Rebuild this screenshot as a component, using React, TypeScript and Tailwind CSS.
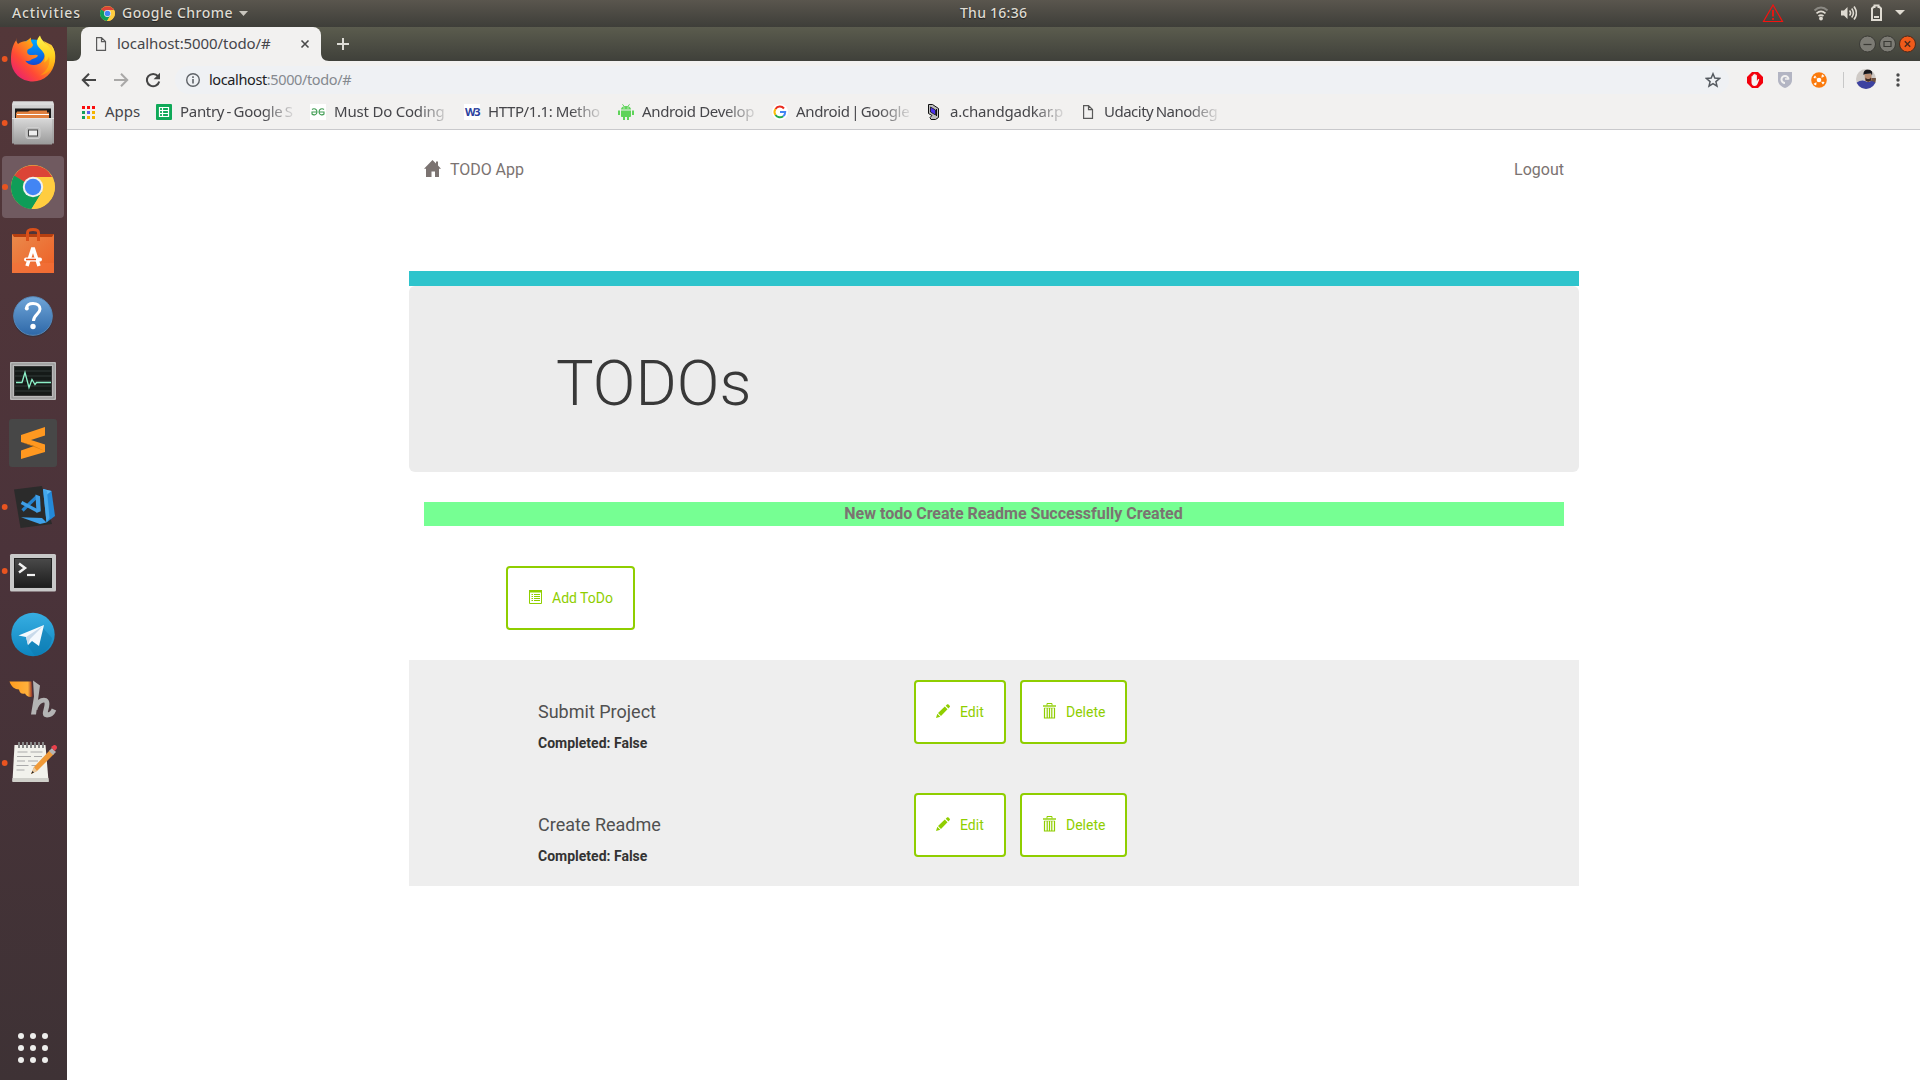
import React from "react";

type IconProps = { children: React.ReactNode; w?: number; h?: number; className?: string };

const Svg = ({ children, w = 16, h = 16, className = "" }: IconProps) => (
  <svg width={w} height={h} viewBox={`0 0 ${w} ${h}`} className={`block shrink-0 ${className}`} fill="none">
    {children}
  </svg>
);

const PageIcon = () => (
  <Svg w={12} h={16}>
    <path d="M1.600 1.600h4.900l4 4v8.800H1.600z M6.500 1.800v3.800h4" stroke="#5a5a5a" strokeWidth="1.200" />
  </Svg>
);

const ChromeLogo = ({ size }: { size: number }) => (
  <svg width={size} height={size} viewBox="0 0 44 44" className="block shrink-0">
    <circle cx="22" cy="22" r="22" fill="#ffcd40" />
    <path d="M22 22 3 11A22 22 0 0 1 41.2 12H22z" fill="#db4437" />
    <path d="M22 22 3.2 10.6A22 22 0 0 0 20.500 44L31 27z" fill="#0f9d58" />
    <path d="M22 12h19.200A22 22 0 0 1 20.500 44L31 27z" fill="#ffcd40" />
    <circle cx="22" cy="22" r="10.200" fill="#f1f1f1" />
    <circle cx="22" cy="22" r="8.200" fill="#4285f4" />
  </svg>
);

const Slot = ({ children, running = false, dy = 0 }: { children: React.ReactNode; running?: boolean; dy?: number }) => (
  <svg width="67" height="64" viewBox="0 0 67 64" className="block shrink-0">
    <g transform={`translate(0 ${dy})`}>{children}</g>
    {running && <circle cx="4.700" cy="32" r="2.900" fill="#e95420" />}
  </svg>
);

const Dock = () => (
  <aside className="flex w-[67px] shrink-0 flex-col justify-between bg-linear-to-b from-[#533739] via-[#4b333a] to-[#3e3235]">
    <svg width="0" height="0" className="absolute">
      <defs>
        <linearGradient id="fox" x1="1" y1="0" x2="0" y2="1">
          <stop offset="0" stopColor="#fff44f" />
          <stop offset=".35" stopColor="#ffa016" />
          <stop offset=".65" stopColor="#ff4a35" />
          <stop offset="1" stopColor="#e0108a" />
        </linearGradient>
        <linearGradient id="globe" x1="0" y1="0" x2="0" y2="1">
          <stop offset="0" stopColor="#00aaff" />
          <stop offset=".6" stopColor="#0a5be0" />
          <stop offset="1" stopColor="#40108a" />
        </linearGradient>
        <linearGradient id="flame" x1="0" y1="0" x2="0" y2="1">
          <stop offset="0" stopColor="#fff44f" />
          <stop offset=".5" stopColor="#ffd21f" />
          <stop offset="1" stopColor="#ff8a10" />
        </linearGradient>
        <linearGradient id="steel" x1="0" y1="0" x2="0" y2="1">
          <stop offset="0" stopColor="#d8d8d8" />
          <stop offset="1" stopColor="#9a9a9a" />
        </linearGradient>
        <linearGradient id="bag" x1="0" y1="0" x2="1" y2="1">
          <stop offset="0" stopColor="#ea8a4c" />
          <stop offset="1" stopColor="#ee5f25" />
        </linearGradient>
        <linearGradient id="help" x1="0" y1="0" x2="0" y2="1">
          <stop offset="0" stopColor="#6fa5d8" />
          <stop offset="1" stopColor="#2e68a8" />
        </linearGradient>
        <linearGradient id="screen" x1="0" y1="0" x2="0" y2="1">
          <stop offset="0" stopColor="#4a4a4a" />
          <stop offset="1" stopColor="#1c1c1c" />
        </linearGradient>
        <linearGradient id="tg" x1="0" y1="0" x2="0" y2="1">
          <stop offset="0" stopColor="#37aee2" />
          <stop offset="1" stopColor="#0d85bf" />
        </linearGradient>
        <linearGradient id="wing" x1="0" y1="0" x2="1" y2="0">
          <stop offset="0" stopColor="#ff9c1e" />
          <stop offset=".8" stopColor="#ffb13c" />
          <stop offset="1" stopColor="#8a2a2a" />
        </linearGradient>
      </defs>
    </svg>
    <div className="flex flex-col">
      <Slot running dy={0.5}>
        <circle cx="33" cy="30" r="18" fill="url(#globe)" />
        <path
          d="M16 9.500c0 3 .5 5 2 7 3-2 6-3 8-2.500l5-4c-.5 3 .5 5 2 7 0 3-3 3.500-5.500 5.500-1 3 .5 5 4 5 3 0 5-1 6.500.5-1.500 3-5 2.500-7 4.500-2 1.500-5 1-6 .5 3 4.500 9 5.500 13.500 3.500 5.500-2.500 7-8 5.500-13 3 1 4 3 4.500 5 .5-6-2-11-5-15l8 4c3 4.500 4.500 9 3.500 16-1.500 12-11 20.500-22 20.500-12 0-22-9-22-22 0-9 2-15 5-19z"
          fill="url(#fox)"
        />
        <path
          d="M40 8c-3.500 4-4.500 8-1 12 4.500 4.500 8 8 5 15 3-1.500 4.500-4 5-6 2 7-2 15-9 19 9-2 15-8 15-18 0-5-1-9-3-11 0 2 0 3-.5 4-2.500-6-9.500-8-11.500-15z"
          fill="url(#flame)"
        />
      </Slot>
      <Slot running dy={0.5}>
        <path d="M13 10h40l1 4v38H12V14z" fill="url(#steel)" />
        <path d="M13 10h40l1 3.500H12z" fill="#dcdcdc" />
        <path d="M15 17h36v10H15z" fill="#1b1b1b" />
        <path d="M17 21v-1h11l2-1h17v2h2v7H16v-7z" fill="#e0803f" />
        <path d="M17 23h32" stroke="#fff" />
        <path d="M14 27h38v26H14z" fill="url(#steel)" />
        <path d="M12 27h42" stroke="#e4e4e4" />
        <rect x="26" y="36" width="14" height="11" rx="2" fill="#bdbdbd" stroke="#cfcfcf" />
        <rect x="28.500" y="38.500" width="9" height="6" fill="#eee" stroke="#444" />
      </Slot>
      <div className="flex h-16 w-[67px] items-center pl-0.5">
        <div className="flex h-[62px] w-[62px] items-center rounded bg-[#705a60]">
          <span className="size-1.5 shrink-0 rounded-full bg-[#e95420]" />
          <div className="ml-[3px]">
            <ChromeLogo size={44} />
          </div>
        </div>
      </div>
      <Slot dy={1}>
        <path d="M12 14h42v4H12z" fill="#b53f10" />
        <path d="M12 14l2 3h38l2-3v39H12z" fill="url(#bag)" />
        <path d="M12 43h42v10H12z" fill="#f4713a" opacity=".6" />
        <path d="M27.500 21v-8c0-3 2-3.500 5.500-3.500s5.500.5 5.500 3.500v8" stroke="#d9501a" strokeWidth="3" fill="none" />
        <path d="M27 46l5.500-17h1L39 46" stroke="#fff" strokeWidth="3.500" fill="none" />
        <rect x="24" y="37.500" width="18" height="4" rx="2" fill="#fff" />
        <path d="M26 39.500h10" stroke="#e95420" strokeWidth="1.500" />
      </Slot>
      <Slot dy={1}>
        <circle cx="33" cy="33" r="20" fill="#1d2d40" opacity=".35" />
        <circle cx="33" cy="32" r="19.300" fill="url(#help)" stroke="#5788b8" />
        <path d="M26.500 24c.5-3 3-4.500 6.500-4.500 4 0 7 2 7 5.500 0 5-6.500 5.500-6.500 12" stroke="#fff" strokeWidth="3" fill="none" />
        <circle cx="26.800" cy="24.500" r="2" fill="#fff" />
        <circle cx="33" cy="42.500" r="2.700" fill="#fff" />
      </Slot>
      <Slot dy={1}>
        <rect x="10" y="14" width="46" height="38" rx="1" fill="#b9b9b9" />
        <rect x="12" y="16" width="42" height="34" fill="none" stroke="#8e8e8e" />
        <rect x="14.500" y="18.500" width="37" height="29" fill="#151a18" stroke="#333" />
        <path d="M15 23h36M15 28h36M15 33h36M15 38h36M15 43h36" stroke="#333b38" />
        <path d="M16 34.500h6l3-10 4 15 3-8 3 5 1.500-2H51" stroke="#8cf0c8" strokeWidth="1.300" fill="none" />
      </Slot>
      <Slot>
        <rect x="9" y="8" width="48" height="48" rx="3" fill="#474747" />
        <path d="M45 16v8.500l-14 4.500 14 4.500V41L21 48v-8.500l13-4.500-13-4V24z" fill="#ff9820" />
        <path d="M21 31l24 9-11-5z" fill="#d87b0c" />
      </Slot>
      <Slot running>
        <path d="M14 14.500 42 11l10 38-31.500 4z" fill="#2b2b2b" />
        <path d="M43 14l8.500 2L55 41l-8.500 6.500z" fill="#2489d8" />
        <path d="M43 14l8.500 2-5 4z" fill="#5bb8f4" />
        <path d="M43 14l4 2 2.500 27-3 4.500z" fill="#45a8ec" />
        <path d="M21 42.200l21 .8 4.500 4.500L40 49z" fill="#3ea1ea" />
        <path d="M22.500 35.500 37 21.500" stroke="#2483cf" strokeWidth="3.200" fill="none" />
        <path d="M21.500 27.500 37.500 36" stroke="#3f9ee6" strokeWidth="3.200" fill="none" />
        <path d="M35.500 19.500l4.500 1.800.8 15-4.300 1.700z" fill="#3f9ee6" />
      </Slot>
      <Slot running dy={0.5}>
        <rect x="10" y="14.500" width="46" height="37.500" rx="1.500" fill="#c8c8c8" />
        <rect x="14.500" y="19" width="37" height="29" fill="url(#screen)" stroke="#222" />
        <path d="M19 24l6 4.500-6 4.500" stroke="#f2f2f2" strokeWidth="2.500" fill="none" />
        <path d="M27 35.500h8" stroke="#f2f2f2" strokeWidth="2.200" />
      </Slot>
      <Slot>
        <circle cx="33" cy="31.500" r="21.700" fill="url(#tg)" />
        <path d="M42 24l10 11c-1 9-8 17-17 18l-7-10z" fill="#0c75aa" opacity=".4" />
        <path d="M18.500 32.500 44 22 39 43l-7-5-4 4-2-8z" fill="#f4f9fd" />
        <path d="M26 34l17-11-13 13-2 6z" fill="#c8daea" />
      </Slot>
      <Slot dy={0.5}>
        <path d="M9.500 14h22l1 15c-3 1-6 0-7.500-3-3 1-5.500-.5-6-4-4 0-8-3-9.500-8z" fill="url(#wing)" />
        <path d="M33 13l7 5-4 29h-5l3-18z" fill="#b4b4b4" />
        <path d="M35 42c2-9 12-13 12-5.500 0 5-4 11 0 11 4 0 6-3 7-5.500" stroke="#b4b4b4" strokeWidth="4.800" fill="none" />
      </Slot>
      <Slot running dy={-2}>
        <path d="M14.500 16h31l3 36H12.500z" fill="#f2f2ec" />
        <path d="M12.500 49h36l.3 4H12.300z" fill="#d0d0ca" />
        <path d="M17.500 23h10m3 0h12M17 27.500h14m3 0h8M17 32h8m3 0h10M16.500 36.500h12m3 0h5M16.500 41h8" stroke="#aaa" />
        <path d="M19 13v6M23 13v6M27 13v6M31 13v6M35 13v6M39 13v6M43 13v6" stroke="#888" strokeWidth="2" />
        <path d="M31 45l3-7 16-17 4 4-17 17z" fill="#f09a38" />
        <path d="M31 45l3-7 3 4z" fill="#e8c9a0" />
        <path d="M31 45l1.500-3 1.500 1.500z" fill="#222" />
        <path d="M49 22l3-3 4 4-3 3z" fill="#b4b4b4" />
        <path d="M51 18l3-2c2-.5 4 2 2.500 4l-2 2z" fill="#e8414c" />
      </Slot>
    </div>
    <div className="mb-[17px] ml-[18px] grid w-[30px] grid-cols-3 gap-1.5">
      {Array.from({ length: 9 }, (_, i) => (
        <span key={i} className="size-1.5 rounded-full bg-[#eeeeec]" />
      ))}
    </div>
  </aside>
);

const TopBar = () => (
  <header className="flex h-[27px] items-center bg-linear-to-b from-[#5a564e] to-[#3e3e39] text-[14px] font-medium text-[#dfdbd2] [text-shadow:0_1px_1px_#222]">
    <div className="flex w-[960px] items-center pl-3">
      <span className="w-[88px] pb-0.5 tracking-[0.85px]">Activities</span>
      <ChromeLogo size={15} />
      <span className="ml-[7px] w-[117px] pb-0.5 tracking-[0.5px]">Google Chrome</span>
      <Svg w={10} h={6}>
        <path d="M0 0h9L4.500 5z" fill="#c9c6be" />
      </Svg>
    </div>
    <span className="pb-0.5 tracking-[0.25px] whitespace-nowrap">Thu 16:36</span>
    <div className="ml-auto flex items-center pr-[15px] pb-px">
      <Svg w={22} h={20} className="mr-[29px]">
        <path d="M11 2 1.500 18.500h19z" stroke="#f5120f" strokeWidth="1.200" />
        <path d="M11 7v6.500M11 15v2" stroke="#f5120f" strokeWidth="1.800" />
      </Svg>
      <Svg w={16} h={16} className="mr-[12px]">
        <path d="M1.500 5.500c4-4 9-4 13 0" stroke="#8b8983" strokeWidth="2" />
        <path d="M3.500 8.300c3-2.600 6-2.600 9 0M5.500 11c1.800-1.400 3.200-1.400 5 0" stroke="#dfdbd2" strokeWidth="1.700" />
        <circle cx="8" cy="13.500" r="1.900" fill="#dfdbd2" />
      </Svg>
      <Svg w={16} h={16} className="mr-[13px]">
        <path d="M0 5.500h3L6.500 2v12L3 10.500H0z" fill="#dfdbd2" />
        <path d="M8.500 5.500c1.300 1.500 1.300 3.500 0 5M10.700 3.500c2.300 3 2.300 6 0 9M13 1.500c3 4 3 9 0 13" stroke="#dfdbd2" strokeWidth="1.600" />
      </Svg>
      <Svg w={14} h={18} className="mr-[11px]">
        <path d="M2 16V4.500L3.500 3h1V1.500h4V3h1L11 4.500V16z" stroke="#dfdbd2" strokeWidth="2" />
        <path d="M4 13h5" stroke="#dfdbd2" strokeWidth="2" />
      </Svg>
      <Svg w={10} h={6}>
        <path d="M0 0h10L5 5z" fill="#dfdbd2" />
      </Svg>
    </div>
  </header>
);

const TabStrip = () => (
  <div className="flex h-[34px] bg-linear-to-b from-[#5b5c4e] to-[#3f403a]">
    <div className="ml-1.5 flex w-2 items-end">
      <Svg w={8} h={8}>
        <path d="M8 0v8H0c5 0 8-3 8-8z" fill="#f2f1f0" />
      </Svg>
    </div>
    <div className="flex w-[240px] items-center rounded-t-lg bg-[#f2f1f0] pl-[14px]">
      <PageIcon />
      <span className="ml-[10px] w-[183px] pb-0.5 text-[15px] tracking-[-0.08px] whitespace-nowrap text-[#45454a]">
        localhost:5000/todo/#
      </span>
      <Svg w={10} h={10}>
        <path d="M1.500 1.500l7 7M8.500 1.500l-7 7" stroke="#4a4a4a" strokeWidth="1.600" />
      </Svg>
    </div>
    <div className="flex w-2 items-end">
      <Svg w={8} h={8}>
        <path d="M0 0v8h8C3 8 0 5 0 0z" fill="#f2f1f0" />
      </Svg>
    </div>
    <div className="ml-2 flex items-center">
      <Svg w={12} h={12}>
        <path d="M6 0v12M0 6h12" stroke="#dddcd6" strokeWidth="2" />
      </Svg>
    </div>
    <div className="ml-auto flex items-center gap-[3px] pr-1">
      <Svg w={17} h={18}>
        <circle cx="8.500" cy="9" r="8" fill="#7c7b74" stroke="#3a3a35" />
        <path d="M4.500 9.500h8" stroke="#3a3a35" strokeWidth="1.200" />
      </Svg>
      <Svg w={17} h={18}>
        <circle cx="8.500" cy="9" r="8" fill="#7c7b74" stroke="#3a3a35" />
        <path d="M5 6.500h7v5H5z" stroke="#3a3a35" strokeWidth="1.200" />
      </Svg>
      <Svg w={17} h={18}>
        <circle cx="8.500" cy="9" r="8" fill="#f05a1a" stroke="#4a2a1c" />
        <path d="M5.800 6.300l5.400 5.400M11.200 6.300l-5.400 5.400" stroke="#4a2a1c" strokeWidth="1.400" />
      </Svg>
    </div>
  </div>
);

const Toolbar = () => (
  <div className="flex h-[37px] items-center bg-[#f2f1f0] pl-[14px]">
    <Svg w={16} h={16}>
      <path d="M15 8H2M8 1.800 1.800 8 8 14.200" stroke="#454545" strokeWidth="2" />
    </Svg>
    <Svg w={16} h={16} className="ml-4">
      <path d="M1 8h13M8 1.800 14.200 8 8 14.200" stroke="#a9a8a7" strokeWidth="2" />
    </Svg>
    <Svg w={16} h={16} className="ml-4">
      <path d="M13 4.200A6.200 6.200 0 1 0 14.200 9.500" stroke="#454545" strokeWidth="2" />
      <path d="M15 .8v6.400H8.600z" fill="#454545" />
    </Svg>
    <div className="ml-[14px] flex h-7 w-[1554px] items-center rounded-full bg-[#eff1f4] pl-[10px]">
      <Svg w={16} h={16}>
        <circle cx="8" cy="8" r="6.300" stroke="#5f6368" strokeWidth="1.400" />
        <path d="M8 7v4.500M8 4.200v1.700" stroke="#5f6368" strokeWidth="1.600" />
      </Svg>
      <span className="ml-2 text-[14.5px] tracking-[-0.38px] whitespace-nowrap text-[#85898f]">
        <span className="text-[#202124]">localhost</span>:5000/todo/#
      </span>
      <Svg w={16} h={16} className="mr-2 ml-auto">
        <path d="M8 1.800l1.800 4.300 4.700.4-3.600 3.100 1.100 4.600L8 11.700l-4 2.500 1.100-4.600-3.600-3.100 4.700-.4z" stroke="#555a60" strokeWidth="1.500" />
      </Svg>
    </div>
    <div className="flex items-center">
      <Svg w={16} h={16} className="ml-[18px]">
        <path d="M5 0h6l5 5v6l-5 5H5l-5-5V5z" fill="#f3000c" />
        <path d="M4.500 8V4.500c0-.8 1.200-.8 1.200 0V3.200c0-.9 1.400-.9 1.400 0v-.7c0-.9 1.500-.9 1.500 0v1c0-.9 1.300-.9 1.300 0V9l1-1.500c.6-.8 1.600-.2 1.200.6L10.500 12c-.6 1.300-1.500 2-2.700 2-2.300 0-3.300-1.700-3.300-3.500z" fill="#f4f4f4" />
      </Svg>
      <Svg w={14} h={16} className="ml-[15px]">
        <path d="M0 0h14v8c0 4-3 6.500-7 8-4-1.500-7-4-7-8z" fill="#b3b5c3" />
        <path d="M10.500 7.500A3.500 3.500 0 1 0 7 11" stroke="#f2f1f0" strokeWidth="2" />
        <path d="M7 7h3.500" stroke="#f2f1f0" strokeWidth="1.500" />
      </Svg>
      <Svg w={16} h={16} className="ml-[19px]">
        <circle cx="8" cy="8" r="7.800" fill="#fb7a0c" />
        <circle cx="8" cy="8" r="2.300" fill="#fff" />
        <path d="M3 6l1.500-2M3 5l2.500 1M11 3l2 1.500M11.500 2.800 11 5.500M13 10l-1.500 2M13 11l-2.500-1M5 13l-2-1.500M4.500 13.200 5 10.500" stroke="#fff" strokeWidth="1.300" />
      </Svg>
      <span className="ml-4 h-4 w-px bg-[#c8c8c8]" />
      <Svg w={20} h={20} className="-mt-0.5 ml-3">
        <clipPath id="face">
          <circle cx="10" cy="10" r="10" />
        </clipPath>
        <g clipPath="url(#face)">
          <path d="M0 0h20v20H0z" fill="#cfcac6" />
          <path d="M14 9h6v5h-6z" fill="#6d5040" />
          <path d="M0 14c4-3 7-3 9-2l3 1c3-2 5-1 8 1v6H0z" fill="#3d42a0" />
          <path d="M8.500 5h7v6c-1 2.500-5 3-6.500 0z" fill="#b98c70" />
          <path d="M7.500 6C7 1.500 10 .5 12.500.5S17 2 16 6.500L15 4.500 9 5z" fill="#17161a" />
          <path d="M9.500 8.500c1.500 2 4 2 5.500 0v3c-1.500 1.500-4 1.500-5.500 0z" fill="#3b2a26" />
        </g>
      </Svg>
      <Svg w={6} h={16} className="ml-[19px]">
        <circle cx="3" cy="3" r="1.700" fill="#4a4a4a" />
        <circle cx="3" cy="8" r="1.700" fill="#4a4a4a" />
        <circle cx="3" cy="13" r="1.700" fill="#4a4a4a" />
      </Svg>
    </div>
  </div>
);

const appColors = ["#fb0d0d", "#fb0d0d", "#fb0d0d", "#12a05c", "#5a5ff0", "#f4b400", "#12a05c", "#f4b400", "#f4b400"];

const bookmarks: { label: string; icon: React.ReactNode; spacing: string }[] = [
  {
    label: "Pantry - Google S",
    spacing: "tracking-[-0.3px] [word-spacing:-1.2px]",
    icon: (
      <Svg>
        <rect width="16" height="16" rx="1" fill="#0fa958" />
        <path d="M3.500 3.500h9v9h-9zM3.500 6.500h9M3.500 9.500h9M6.500 3.500v9" stroke="#fff" strokeWidth="1.200" />
      </Svg>
    ),
  },
  {
    label: "Must Do Coding",
    spacing: "tracking-[-0.2px]",
    icon: (
      <Svg>
        <path d="M0 0h16v16H0z" fill="#fff" />
        <path d="M2 5.500c2-1.500 5-.5 5 2.500s-3.500 3.500-5 2V8h5M14 5.500c-2-1.500-5-.5-5 2.500s3.500 3.500 5 2V8H9" stroke="#3f9c52" strokeWidth="1.100" />
      </Svg>
    ),
  },
  {
    label: "HTTP/1.1: Metho",
    spacing: "tracking-[-0.4px]",
    icon: (
      <span className="flex size-4 items-center justify-center bg-white font-['Open_Sans',sans-serif] text-[11px] font-bold tracking-[-1.5px] text-[#2b3f9e]">
        W3
      </span>
    ),
  },
  {
    label: "Android Develop",
    spacing: "tracking-[-0.35px]",
    icon: (
      <Svg>
        <path d="M3 5.500C3 3.500 5 2 8 2s5 1.500 5 3.500zM3 6.500h10V12c0 .6-.4 1-1 1H4c-.6 0-1-.4-1-1zM0 6.500h2V11H0zM14 6.500h2V11h-2zM5 12h2v4H5zM9 12h2v4H9z" fill="#5fd35a" />
        <path d="M4.500.3l1.500 2M11.500.3 10 2.300" stroke="#5fd35a" />
        <path d="M5.500 3.500h1v1h-1zM9.500 3.500h1v1h-1z" fill="#fff" />
      </Svg>
    ),
  },
  {
    label: "Android | Google",
    spacing: "tracking-[-0.35px] [word-spacing:-2px]",
    icon: (
      <Svg>
        <circle cx="8" cy="8" r="8" fill="#fff" />
        <path d="M3.500 5A5.300 5.300 0 0 1 12 4.500" stroke="#ea2d20" strokeWidth="2" />
        <path d="M3.500 5a5.300 5.300 0 0 0 0 6" stroke="#fbbc05" strokeWidth="2" />
        <path d="M3.500 11a5.300 5.300 0 0 0 7.700 1.200" stroke="#22a84c" strokeWidth="2" />
        <path d="M8 8h5.200c0 2-.7 3.300-2 4.200" stroke="#4285f4" strokeWidth="2" />
      </Svg>
    ),
  },
  {
    label: "a.chandgadkar.p",
    spacing: "tracking-[-0.2px]",
    icon: (
      <Svg>
        <path d="M2.500.5h4l6 4v9l-3 2H5l-1-2 2-2-3.500-2z" fill="#bcbcbc" stroke="#111" />
        <path d="M4.500 3l5 3v5l-5-3z" fill="#4a2ff0" stroke="#111" strokeWidth=".8" />
        <path d="M10.500 5v7" stroke="#111" />
      </Svg>
    ),
  },
  {
    label: "Udacity Nanodeg",
    spacing: "tracking-[-0.5px] [word-spacing:-1px]",
    icon: (
      <div className="w-4 pl-0.5">
        <PageIcon />
      </div>
    ),
  },
];

const BookmarksBar = () => (
  <div className="flex h-8 items-center border-b border-[#c9c9cc] bg-[#f2f1f0] pb-[3px] pl-[15px] text-[15px] text-[#46464a]">
    <div className="flex w-[74px] items-center">
      <div className="grid w-[13px] grid-cols-3 gap-0.5">
        {appColors.map((c, i) => (
          <span key={i} className="size-[3px]" style={{ backgroundColor: c }} />
        ))}
      </div>
      <span className="ml-[10px] pb-0.5">Apps</span>
    </div>
    {bookmarks.map((b) => (
      <div key={b.label} className="flex w-[154px] shrink-0 items-center">
        {b.icon}
        <span
          className={`ml-2 w-[118px] pb-0.5 whitespace-nowrap mask-[linear-gradient(to_right,black_70%,transparent_100%)] ${b.spacing}`}
        >
          {b.label}
        </span>
      </div>
    ))}
  </div>
);

const HomeIcon = () => (
  <Svg w={17} h={17}>
    <path d="M8.500 0 12 3.500V1.500h2v4L17 8.800h-2V17h-4v-5.500H7.500V17H2V8.800H0z" fill="#7b7371" />
  </Svg>
);
const ListIcon = () => (
  <Svg w={14} h={14}>
    <path d="M.5.500h12v13H.5z" stroke="#8fce00" />
    <path d="M0 0h13v2.500H0z" fill="#8fce00" />
    <path d="M2.500 4.500h1.500M5 4.500h6M2.500 6.500h1.500M5 6.500h6M2.500 8.500h1.500M5 8.500h6M2.500 10.500h1.500M5 10.500h6" stroke="#8fce00" />
  </Svg>
);
const PencilIcon = () => (
  <Svg w={14} h={14}>
    <path d="M0 14l1.300-4.300 3 3zM2 9l6.800-6.500 2.700 2.700L5 12zM9.700 1.700 11 .5c.5-.5 1-.5 1.500 0L13.700 1.700c.4.400.4 1 0 1.400L12.500 4.400z" fill="#8fce00" />
  </Svg>
);
const TrashIcon = () => (
  <Svg w={13} h={16}>
    <path d="M4 2.500v-2h5v2" stroke="#8fce00" />
    <path d="M0 3h13" stroke="#8fce00" strokeWidth="1.400" />
    <path d="M1.500 5v10h10V5M4.200 5v9.500M6.500 5v9.500M8.800 5v9.500" stroke="#8fce00" strokeWidth="1.200" />
    <path d="M1 5h11" stroke="#8fce00" strokeOpacity=".5" />
  </Svg>
);

const ActionButton = ({ icon, label, className }: { icon: React.ReactNode; label: string; className: string }) => (
  <button className={`flex h-16 items-center rounded border-2 border-[#8fce00] bg-white text-[14px] text-[#8fce00] ${className}`}>
    <span className="-mt-[3px]">{icon}</span>
    <span>{label}</span>
  </button>
);

const todos = ["Submit Project", "Create Readme"];

const TodoPage = () => (
  <main className="flex flex-1 flex-col bg-white font-['Roboto',sans-serif]">
    <div className="ml-[342px] flex w-[1170px] flex-col">
      <nav className="flex h-[141px] items-start justify-between px-[15px] pt-7 text-[16px] leading-6 text-[#7b7371]">
        <a className="flex items-start">
          <span className="pt-0.5">
            <HomeIcon />
          </span>
          <span className="ml-[9px] tracking-[-0.05px]">TODO App</span>
        </a>
        <a>Logout</a>
      </nav>
      <div className="h-[15px] bg-[#2ec4cc]" />
      <div className="flex h-[186px] items-center rounded-md bg-[#ececec] pt-[9px] pl-[147px]">
        <h1 className="text-[63px] leading-none font-light text-[#383838]">TODOs</h1>
      </div>
      <div className="mx-[15px] mt-[30px] h-6 bg-[#76ff93] pl-[39px] text-center text-[16px] leading-6 font-bold text-[#7b7371]">
        New todo Create Readme Successfully Created
      </div>
      <div className="mt-10 ml-[97px] flex">
        <ActionButton icon={<ListIcon />} label="Add ToDo" className="w-[129px] gap-[9px] pl-[21px]" />
      </div>
      <section className="mt-[30px] h-[226px] bg-[#eee]">
        {todos.map((title) => (
          <div key={title} className="flex h-[113px] pt-5">
            <div className="ml-[129px] w-[376px] pt-5">
              <h4 className="text-[18px] leading-6 text-[#505050]">{title}</h4>
              <p className="mt-[9px] text-[14px] leading-5 font-bold text-[#333]">Completed: False</p>
            </div>
            <ActionButton icon={<PencilIcon />} label="Edit" className="w-[92px] gap-[10px] pl-5" />
            <ActionButton icon={<TrashIcon />} label="Delete" className="ml-[14px] w-[107px] gap-[10px] pl-[21px]" />
          </div>
        ))}
      </section>
    </div>
  </main>
);

export default function App() {
  return (
    <div className="flex h-[1080px] w-[1920px] flex-col overflow-hidden bg-white font-['Noto_Sans',sans-serif]">
      <TopBar />
      <div className="flex min-h-0 flex-1">
        <Dock />
        <div className="flex min-w-0 flex-1 flex-col">
          <TabStrip />
          <Toolbar />
          <BookmarksBar />
          <TodoPage />
        </div>
      </div>
    </div>
  );
}
